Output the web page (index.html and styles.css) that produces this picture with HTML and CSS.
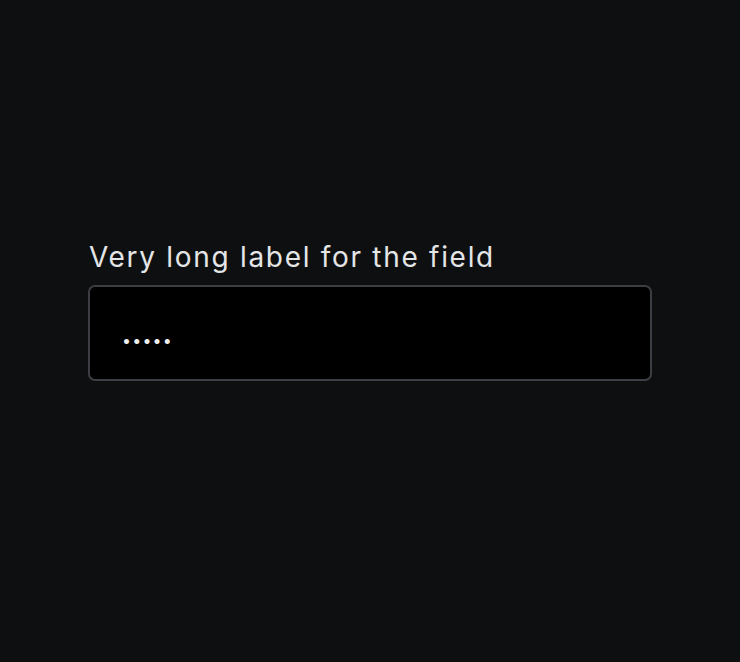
FILE: index.html
```html
<!DOCTYPE html>
<html>
<head>
<meta charset="utf-8">
<link rel="stylesheet" href="styles.css">
</head>
<body>
<main class="page">
  <div class="field">
    <label class="label" for="pw">Very long label for the field</label>
    <input class="input" id="pw" type="password" value="12345">
  </div>
</main>
</body>
</html>
```
FILE: styles.css
```css
html, body {
  margin: 0;
  padding: 0;
  background: #0e0f11;
}
.page {
  width: 740px;
  height: 662px;
  box-sizing: border-box;
  padding: 239px 88px 0 88px;
  font-family: Inter, "Noto Sans", sans-serif;
}
.field {
  display: flex;
  flex-direction: column;
  gap: 10px;
}
.label {
  color: #e4e5e7;
  font-size: 28px;
  line-height: 36px;
  letter-spacing: 1.7px;
  padding-left: 1px;
}
.input {
  box-sizing: border-box;
  width: 564px;
  height: 96px;
  margin: 0;
  padding: 14px 32px 0 32px;
  background: #000;
  border: 2px solid #3c3e44;
  border-radius: 7px;
  color: #eeeeee;
  font-family: Inter, "Noto Sans", sans-serif;
  font-size: 16px;
  letter-spacing: 1.2px;
  outline: none;
}
```
